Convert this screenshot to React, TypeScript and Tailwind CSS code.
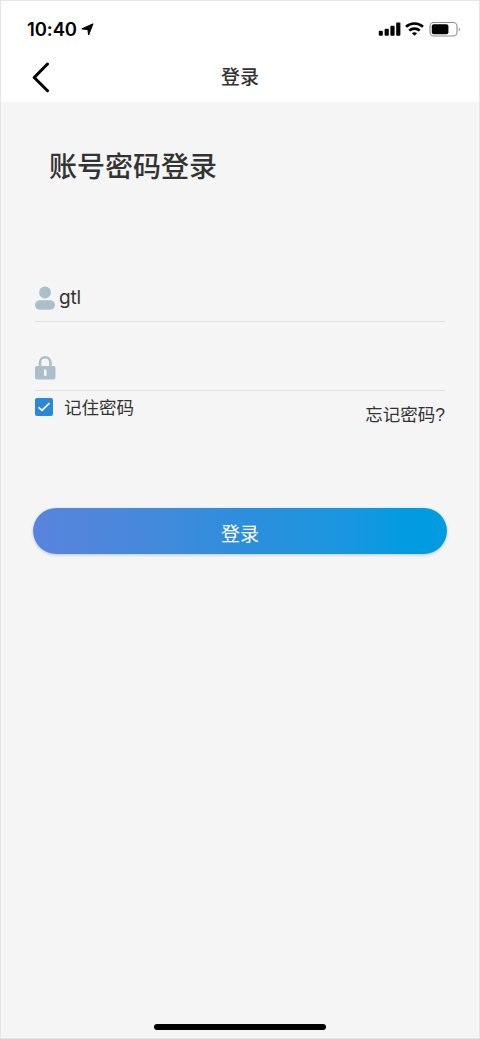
import React, { useState } from 'react'

const StatusBar: React.FC = () => (
  <div className="flex h-[55px] items-center justify-between pl-[26px] pr-[18px] pt-px text-black">
    <div className="flex items-center gap-1">
      <span className="font-['Inter',sans-serif] text-[18.5px] leading-6 font-semibold tracking-[-0.1px]">
        10:40
      </span>
      <svg width="13" height="13" viewBox="0 0 13 13" fill="currentColor" stroke="currentColor" strokeWidth="1" strokeLinejoin="round">
        <path d="M12 .8 7.600 12 6.900 6.600.8 5.900z" />
      </svg>
    </div>
    <div className="flex items-center">
      <svg width="23" height="14" viewBox="0 0 23 14" fill="currentColor">
        <rect x="0.8" y="8.8" width="4" height="4.9" rx="1" />
        <rect x="6.6" y="6.7" width="4.2" height="7" rx="1" />
        <rect x="12.4" y="3.8" width="4.2" height="9.9" rx="1" />
        <rect x="18.2" y="0.5" width="4.2" height="13.2" rx="1" />
      </svg>
      <svg className="ml-1" width="19" height="14" viewBox="0 0 19 14" fill="none" stroke="currentColor">
        <path d="M1 4.8C5.8.4 13.2.4 18 4.8" strokeWidth="2.7" />
        <path d="M4.2 8.600c3-2.700 7.600-2.700 10.600 0" strokeWidth="2.600" />
        <path d="M9.500 13.800 6.900 11.300c1.500-1.300 3.700-1.300 5.200 0z" fill="currentColor" stroke="none" />
      </svg>
      <svg className="ml-[5px]" width="32" height="16" viewBox="0 0 32 16" fill="none">
        <rect x="1" y="1.500" width="27" height="13.500" rx="3.800" stroke="#8c8c8c" strokeWidth="1.100" />
        <rect x="2.800" y="3.200" width="16.600" height="10.100" rx="2" fill="black" />
        <path d="M29.800 6.200c1.300.6 1.300 3.400 0 4z" fill="#777777" />
      </svg>
    </div>
  </div>
)

const UserIcon: React.FC = () => (
  <svg className="shrink-0" width="21" height="24" viewBox="0 0 21 24" fill="#abbfcb">
    <circle cx="10" cy="6.500" r="5.900" />
    <rect x="0" y="14.300" width="20" height="9.400" rx="4.700" />
  </svg>
)

const LockIcon: React.FC = () => (
  <svg className="shrink-0" width="21" height="24" viewBox="0 0 21 24">
    <path d="M5 11V6.500a5.200 5.200 0 0 1 10.400 0V11" fill="none" stroke="#abbfcb" strokeWidth="2.600" />
    <rect x="0" y="10" width="20.500" height="13.500" rx="2" fill="#abbfcb" />
    <rect x="8.900" y="13.500" width="2.700" height="6.600" rx="1" fill="#f5f5f5" />
  </svg>
)

export default function App() {
  const [account, setAccount] = useState('gtl')
  const [password, setPassword] = useState('')
  const [remember, setRemember] = useState(true)

  return (
    <div className="flex h-[1039px] w-[480px] flex-col border border-[#e6e6e6] bg-[#f5f5f5] font-['Liberation_Sans','Noto_Sans_CJK_SC',sans-serif] text-[#333333]">
      <header className="h-[101px] bg-white">
        <StatusBar />
        <div className="grid h-[42px] grid-cols-[60px_1fr_60px] items-center">
          <button className="pl-[31px]" aria-label="返回">
            <svg width="18" height="31" viewBox="0 0 18 31" fill="none" stroke="black" strokeWidth="3" strokeLinecap="round" strokeLinejoin="round">
              <path d="M15.500 2 2.200 15.500l13.300 13.300" />
            </svg>
          </button>
          <h1 className="pt-px text-center text-[19px] leading-7 font-medium">登录</h1>
        </div>
      </header>

      <main className="flex flex-1 flex-col px-[34px]">
        <h2 className="mt-[46px] pl-[14px] text-[28px] leading-10 font-medium">账号密码登录</h2>

        <label className="mt-[86px] flex h-[48px] items-center gap-[3px] border-b border-[#e0e0e0]">
          <UserIcon />
          <input
            className="w-full bg-transparent pt-px font-['Inter',sans-serif] text-[19px] leading-6 tracking-[-0.2px] outline-none"
            value={account}
            onChange={(e) => setAccount(e.target.value)}
          />
        </label>
        <label className="flex h-[69px] items-center gap-[3px] border-b border-[#e0e0e0] pt-6">
          <LockIcon />
          <input
            type="password"
            className="w-full bg-transparent text-[19px] leading-6 outline-none"
            value={password}
            onChange={(e) => setPassword(e.target.value)}
          />
        </label>

        <div className="flex items-start justify-between text-[17.500px] leading-6">
          <button className="mt-[4px] flex items-center gap-[11px]" onClick={() => setRemember(!remember)}>
            <span className="mb-px flex size-[18px] items-center justify-center rounded-[2px] bg-[#2b88d9]">
              {remember && (
                <svg width="12" height="10" viewBox="0 0 12 10" fill="none" stroke="white" strokeWidth="1.700">
                  <path d="m.6 5.300 3.400 3L11.500 1" />
                </svg>
              )}
            </span>
            <span className="pt-px">记住密码</span>
          </button>
          <a className="mt-[12px]">忘记密码?</a>
        </div>

        <button className="-mx-[2px] mt-[81px] h-[46px] rounded-full bg-linear-to-r from-[#5983dc] via-[#2c8edc] via-50% to-[#009be1] to-90% pt-[8px] text-[19px] leading-7 text-white shadow-[0_1px_3px_rgba(70,120,200,0.35)]">
          登录
        </button>
      </main>

      <div className="mx-auto mb-[8px] h-[6px] w-[172px] rounded-full bg-black" />
    </div>
  )
}
